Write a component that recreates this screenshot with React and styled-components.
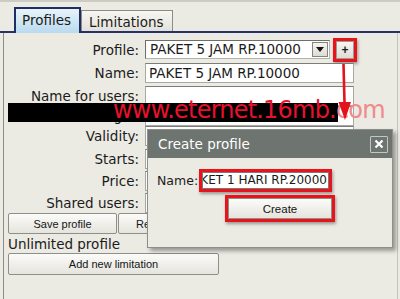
import React from "react";
import styled, { createGlobalStyle } from "styled-components";

const GlobalStyle = createGlobalStyle`
  html, body {
    margin: 0;
    padding: 0;
  }
  body {
    background: #ebeae3;
    font-family: "DejaVu Sans", Verdana, sans-serif;
    color: #1b1b1b;
  }
`;

const Screen = styled.div`
  position: relative;
  width: 400px;
  height: 299px;
  overflow: hidden;
  box-sizing: border-box;
  border-top: 2px solid #cdccc4;
  background: #ebeae3;
`;

const TabBar = styled.div`
  display: flex;
  align-items: flex-end;
  height: 31px;
  box-sizing: border-box;
  padding-left: 14px;
  border-bottom: 2px solid #26336a;
`;

const Tab = styled.div`
  position: relative;
  z-index: 1;
  display: flex;
  align-items: center;
  box-sizing: border-box;
  font-size: 13.5px;
  white-space: nowrap;
  height: ${({ $active }) => ($active ? "26px" : "21px")};
  margin-bottom: ${({ $active }) => ($active ? "-2px" : "0")};
  padding: ${({ $active }) => ($active ? "0 8px 2px 6px" : "2px 8px 0 7px")};
  border: ${({ $active }) => ($active ? "2px solid #1f2c66" : "1px solid #8c8c86")};
  border-bottom: none;
  background: ${({ $active }) =>
    $active
      ? "linear-gradient(#e8f3fa, #b9daef)"
      : "linear-gradient(#f7f6f1, #e2e1d9)"};
`;

const Panel = styled.div`
  margin-left: 3px;
  width: 395px;
  height: 266px;
  box-sizing: border-box;
  border-left: 1px solid #8e8e88;
  border-right: 1px solid #c5c4bc;
  padding: 5px 0 0 4px;
`;

const Form = styled.div`
  display: grid;
  grid-template-columns: 131px 1fr;
  grid-template-rows: 23px 23px 23px 17px 23px 23px 22px 21px;
  column-gap: 6px;
  align-items: center;
`;

const Label = styled.div`
  text-align: right;
  font-size: 13.5px;
  line-height: 16px;
  white-space: nowrap;
`;

const Field = styled.div`
  display: flex;
  align-items: center;
`;

const TextInput = styled.div`
  width: 209px;
  height: 20px;
  box-sizing: border-box;
  background: #fff;
  border: 1px solid #a9a9a3;
  border-top-color: #7c7c78;
  padding-left: 3px;
  font-size: 13.5px;
  line-height: 18px;
  white-space: nowrap;
  overflow: hidden;
`;

const Select = styled.div`
  display: flex;
  align-items: center;
  justify-content: space-between;
  width: 185px;
  height: 19px;
  box-sizing: border-box;
  background: #fff;
  border: 1px solid #b5b5af;
  border-top-color: #6f6f6a;
  border-left-color: #6f6f6a;
  padding-left: 4px;
  font-size: 13.5px;
  line-height: 17px;
  white-space: nowrap;
`;

const DropButton = styled.div`
  display: flex;
  align-items: center;
  justify-content: center;
  width: 16px;
  height: 15px;
  margin-right: 1px;
  box-sizing: border-box;
  background: linear-gradient(#f4f3ee, #dddcd4);
  border: 1px solid #85857f;
`;

const Highlight = styled.div`
  display: flex;
  box-sizing: border-box;
  width: ${({ $w }) => $w}px;
  height: ${({ $h }) => $h}px;
  margin-left: ${({ $ml }) => $ml || 0}px;
  border: 3px solid #e8141c;
  box-shadow: 1px 2px 3px rgba(0, 0, 0, 0.35);
`;

const PlusButton = styled.div`
  flex: 1;
  display: flex;
  align-items: center;
  justify-content: center;
  background: linear-gradient(#f6f5f0, #dedcd4);
  border: 1px solid #9a9a94;
  font-family: "Liberation Sans", Arial, sans-serif;
  font-weight: bold;
  font-size: 12px;
  line-height: 12px;
`;

const ButtonRow = styled.div`
  display: flex;
  gap: 1px;
`;

const Button = styled.button`
  display: flex;
  align-items: center;
  justify-content: center;
  box-sizing: border-box;
  width: ${({ $w }) => $w}px;
  height: ${({ $h }) => $h || 21}px;
  padding: 0;
  margin: 0;
  font-family: "Liberation Sans", Arial, sans-serif;
  font-size: 11px;
  color: #151515;
  background: linear-gradient(#fbfbf9, #e5e4dd);
  border: 1px solid #8f8f89;
  border-radius: 2px;
`;

const Note = styled.div`
  padding-top: 2px;
  height: 17px;
  font-size: 13.5px;
  line-height: 17px;
`;

const Blackout = styled.div`
  position: absolute;
  left: 8px;
  top: 101px;
  width: 330px;
  height: 19px;
  background: #000;
`;

const Watermark = styled.div`
  position: absolute;
  left: 113px;
  top: 96px;
  font-size: 24px;
  line-height: 24px;
  letter-spacing: -0.8px;
  white-space: nowrap;
  color: #e8112d;
`;

const Faded = styled.span`
  color: #ef8b8b;
`;

const Arrow = styled.svg`
  position: absolute;
  left: 334px;
  top: 60px;
`;

const Dialog = styled.div`
  position: absolute;
  left: 147px;
  top: 127px;
  width: 246px;
  height: 119px;
  box-sizing: border-box;
  background: #ebeae3;
  border: 1px solid #8b908d;
  box-shadow: 3px 3px 4px rgba(0, 0, 0, 0.35);
`;

const DialogTitle = styled.div`
  display: flex;
  align-items: center;
  justify-content: space-between;
  height: 28px;
  padding: 0 4px 0 10px;
  background: #6e7571;
  color: #fff;
  font-size: 13.5px;
`;

const CloseButton = styled.div`
  display: flex;
  align-items: center;
  justify-content: center;
  width: 18px;
  height: 17px;
  box-sizing: border-box;
  border: 1px solid #c3c7c4;
  border-radius: 1px;
`;

const DialogBody = styled.div`
  padding: 11px 0 0 9px;
  display: flex;
  flex-direction: column;
  gap: 3px;
`;

const DialogRow = styled.div`
  display: flex;
  align-items: center;
`;

const DialogLabel = styled.div`
  width: 42px;
  font-size: 12.5px;
  line-height: 15px;
`;

const NameBox = styled.div`
  flex: 1;
  display: flex;
  justify-content: flex-end;
  box-sizing: border-box;
  background: #fff;
  border: 1px solid #7a7a7a;
  padding-right: 1px;
  overflow: hidden;
  white-space: nowrap;
  font-size: 12px;
  line-height: 15px;
`;

const CreateButton = styled(Button)`
  flex: 1;
  height: auto;
  font-size: 11.5px;
  border-radius: 0;
`;

export default function App() {
  return (
    <Screen>
      <GlobalStyle />
      <TabBar>
        <Tab $active>Profiles</Tab>
        <Tab>Limitations</Tab>
      </TabBar>
      <Panel>
        <Form>
          <Label>Profile:</Label>
          <Field>
            <Select>
              PAKET 5 JAM RP.10000
              <DropButton>
                <svg width="8" height="5" viewBox="0 0 8 5">
                  <polygon points="0,0 8,0 4,5" fill="#111" />
                </svg>
              </DropButton>
            </Select>
            <Highlight $w={24} $h={24} $ml={3}>
              <PlusButton>+</PlusButton>
            </Highlight>
          </Field>
          <Label>Name:</Label>
          <Field>
            <TextInput>PAKET 5 JAM RP.10000</TextInput>
          </Field>
          <Label>Name for users:</Label>
          <Field>
            <TextInput />
          </Field>
          <Label>Owner login:</Label>
          <Field>
            <TextInput />
          </Field>
          <Label>Validity:</Label>
          <Field>
            <TextInput />
          </Field>
          <Label>Starts:</Label>
          <Field>
            <TextInput />
          </Field>
          <Label>Price:</Label>
          <Field>
            <TextInput />
          </Field>
          <Label>Shared users:</Label>
          <Field>
            <TextInput />
          </Field>
        </Form>
        <ButtonRow>
          <Button $w={109}>Save profile</Button>
          <Button $w={110}>Remove profile</Button>
        </ButtonRow>
        <Note>Unlimited profile</Note>
        <Button $w={211} $h={22}>Add new limitation</Button>
      </Panel>

      <Blackout />
      <Watermark>
        www.eternet.16mb.<Faded>com</Faded>
      </Watermark>
      <Arrow width="22" height="60" viewBox="0 0 22 60">
        <line x1="9.5" y1="2" x2="10.6" y2="44" stroke="#e3131b" strokeWidth="2.6" />
        <polygon points="4.5,40 17,40 11,58" fill="#e3131b" />
      </Arrow>

      <Dialog>
        <DialogTitle>
          Create profile
          <CloseButton>
            <svg width="10" height="10" viewBox="0 0 10 10">
              <path d="M1.5 1.5 L8.5 8.5 M8.5 1.5 L1.5 8.5" stroke="#fff" strokeWidth="2.2" />
            </svg>
          </CloseButton>
        </DialogTitle>
        <DialogBody>
          <DialogRow>
            <DialogLabel>Name:</DialogLabel>
            <Highlight $w={133} $h={23}>
              <NameBox>PAKET 1 HARI RP.20000</NameBox>
            </Highlight>
          </DialogRow>
          <DialogRow>
            <Highlight $w={110} $h={27} $ml={68}>
              <CreateButton as="div">Create</CreateButton>
            </Highlight>
          </DialogRow>
        </DialogBody>
      </Dialog>
    </Screen>
  );
}
